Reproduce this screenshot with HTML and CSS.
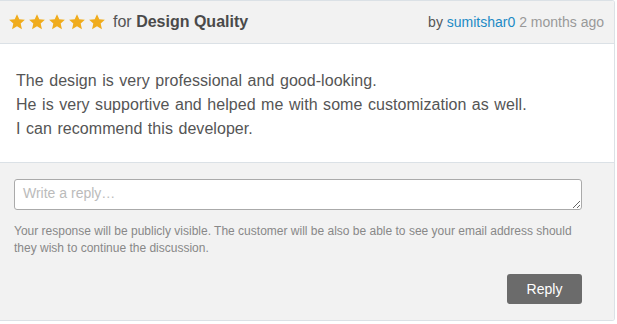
FILE: index.html
```html
<!DOCTYPE html>
<html>
<head>
<meta charset="utf-8">
<link rel="stylesheet" href="styles.css">
</head>
<body>
<div class="review">
  <div class="review-head">
    <div class="rating">
      <span class="stars">
        <svg class="star" viewBox="0 0 24 24"><path d="M12 1.5l3.1 6.9 7.4.7-5.6 5 1.7 7.4L12 17.6l-6.6 3.9 1.7-7.4-5.6-5 7.4-.7z"/></svg>
        <svg class="star" viewBox="0 0 24 24"><path d="M12 1.5l3.1 6.9 7.4.7-5.6 5 1.7 7.4L12 17.6l-6.6 3.9 1.7-7.4-5.6-5 7.4-.7z"/></svg>
        <svg class="star" viewBox="0 0 24 24"><path d="M12 1.5l3.1 6.9 7.4.7-5.6 5 1.7 7.4L12 17.6l-6.6 3.9 1.7-7.4-5.6-5 7.4-.7z"/></svg>
        <svg class="star" viewBox="0 0 24 24"><path d="M12 1.5l3.1 6.9 7.4.7-5.6 5 1.7 7.4L12 17.6l-6.6 3.9 1.7-7.4-5.6-5 7.4-.7z"/></svg>
        <svg class="star" viewBox="0 0 24 24"><path d="M12 1.5l3.1 6.9 7.4.7-5.6 5 1.7 7.4L12 17.6l-6.6 3.9 1.7-7.4-5.6-5 7.4-.7z"/></svg>
      </span>
      <span class="for">for <strong>Design Quality</strong></span>
    </div>
    <div class="meta">by <a class="author" href="#">sumitshar0</a> <span class="time">2 months ago</span></div>
  </div>
  <div class="review-body">
    <p>The design is very professional and good-looking.<br>He is very supportive and helped me with some customization as well.<br>I can recommend this developer.</p>
  </div>
  <div class="review-reply">
    <textarea class="reply-input" placeholder="Write a reply…"></textarea>
    <p class="hint">Your response will be publicly visible. The customer will be also be able to see your email address should they wish to continue the discussion.</p>
    <div class="actions"><button class="reply-btn">Reply</button></div>
  </div>
</div>
</body>
</html>
```
FILE: styles.css
```css
* { box-sizing: border-box; }
html, body { margin: 0; padding: 0; background: #fff; }
body { font-family: "Liberation Sans", Arial, sans-serif; color: #555; }

.review {
  width: 615px;
  border: 1px solid #dbe1e6;
  border-left: none;
  border-radius: 0 3px 3px 0;
  overflow: hidden;
}

.review-head {
  height: 43px;
  background: #f2f2f2;
  border-bottom: 1px solid #dbe1e6;
  display: flex;
  align-items: center;
  justify-content: space-between;
  padding: 0 10px 0 8px;
}
.rating { display: flex; align-items: center; }
.stars { display: flex; gap: 2px; margin-right: 7px; }
.star { width: 18px; height: 18px; fill: #f0ac1d; display: block; }
.for { font-size: 16px; color: #555; }
.for strong { color: #4a4a4a; }
.meta { font-size: 14px; color: #555; }
.author { color: #1c8ac5; text-decoration: none; }
.time { color: #999; }

.review-body {
  background: #fff;
  padding: 25px 16px 21px 16px;
  border-bottom: 1px solid #dbe1e6;
}
.review-body p {
  margin: 0;
  font-size: 16px;
  line-height: 24px;
  letter-spacing: 0.05px;
  word-spacing: 1px;
  color: #555;
}

.review-reply {
  background: #f2f2f2;
  padding: 16px 32px 16px 14px;
}
.reply-input {
  display: block;
  width: 568px;
  height: 31px;
  border: 1px solid #aaa;
  border-radius: 3px;
  padding: 5px 8px;
  font-family: "Liberation Sans", Arial, sans-serif;
  font-size: 14px;
  color: #555;
  resize: vertical;
  background: #fff;
}
.reply-input::placeholder { color: #bbb; }
.hint {
  margin: 13px 0 0;
  font-size: 12px;
  line-height: 17px;
  color: #888;
}
.actions { display: flex; justify-content: flex-end; margin-top: 17px; width: 568px; }
.reply-btn {
  width: 75px;
  height: 30px;
  background: #6b6b6b;
  color: #fff;
  border: none;
  border-radius: 3px;
  font-family: "Liberation Sans", Arial, sans-serif;
  font-size: 14px;
}
```
